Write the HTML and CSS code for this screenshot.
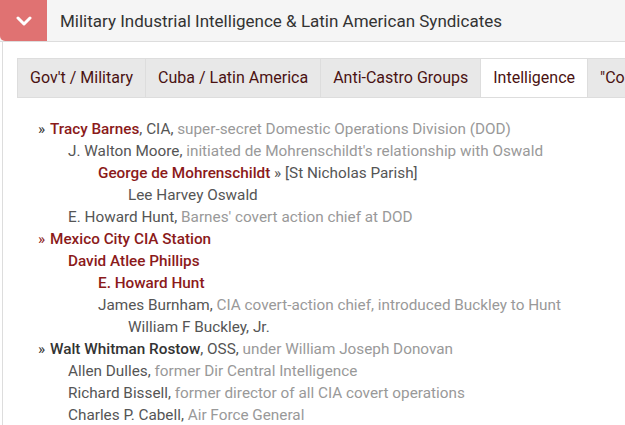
FILE: index.html
```html
<!DOCTYPE html>
<html lang="en">
<head>
    <meta charset="UTF-8">
    <title>Military Industrial Intelligence</title>
    <link rel="stylesheet" href="styles.css">
</head>
<body>
    <div class="acc-header">
        <div class="acc-toggle">
            <svg width="16" height="10" viewBox="0 0 16 10"><path d="M2 2 L8 8 L14 2" fill="none" stroke="#fff" stroke-width="3" stroke-linecap="round" stroke-linejoin="round"/></svg>
        </div>
        <div class="acc-title">Military Industrial Intelligence &amp; Latin American Syndicates</div>
    </div>

    <div class="acc-panel">
        <ul class="tabs">
            <li>Gov't / Military</li>
            <li>Cuba / Latin America</li>
            <li>Anti-Castro Groups</li>
            <li class="active">Intelligence</li>
            <li>"Cold War"</li>
        </ul>

        <div class="tree">
            <div class="row lv0"><span class="mark">»</span><span class="red">Tracy Barnes</span>, CIA, <span class="note">super-secret Domestic Operations Division (DOD)</span></div>
            <div class="row lv1">J. Walton Moore, <span class="note">initiated de Mohrenschildt's relationship with Oswald</span></div>
            <div class="row lv2"><span class="red">George de Mohrenschildt</span> » [St Nicholas Parish]</div>
            <div class="row lv3">Lee Harvey Oswald</div>
            <div class="row lv1">E. Howard Hunt, <span class="note">Barnes' covert action chief at DOD</span></div>
            <div class="row lv0"><span class="mark red-mark">»</span><span class="red">Mexico City CIA Station</span></div>
            <div class="row lv1"><span class="red">David Atlee Phillips</span></div>
            <div class="row lv2"><span class="red">E. Howard Hunt</span></div>
            <div class="row lv2">James Burnham, <span class="note">CIA covert-action chief, introduced Buckley to Hunt</span></div>
            <div class="row lv3">William F Buckley, Jr.</div>
            <div class="row lv0"><span class="mark">»</span><span class="dark">Walt Whitman Rostow</span>, OSS, <span class="note">under William Joseph Donovan</span></div>
            <div class="row lv1">Allen Dulles, <span class="note">former Dir Central Intelligence</span></div>
            <div class="row lv1">Richard Bissell, <span class="note">former director of all CIA covert operations</span></div>
            <div class="row lv1">Charles P. Cabell, <span class="note">Air Force General</span></div>
        </div>
    </div>
</body>
</html>
```

FILE: styles.css
```css
/* page */
body {
    margin: 0;
    font-family: Roboto, "Liberation Sans", sans-serif;
    background-color: #fff;
    color: #555;
    overflow: hidden;
    height: 425px;
}

/* accordion header */
.acc-header {
    display: flex;
    align-items: center;
    height: 41px;
    background-color: #f5f5f5;
    border-bottom: 1px solid #ddd;
}

.acc-toggle {
    width: 47px;
    height: 41px;
    background-color: #e07272;
    border-bottom-left-radius: 5px;
    display: flex;
    align-items: center;
    justify-content: center;
}

.acc-title {
    padding-left: 13px;
    font-size: 17px;
    color: #333;
    white-space: nowrap;
}

/* panel below the header */
.acc-panel {
    margin-left: 2px;
    border-left: 1px solid #ddd;
    padding: 16px 0 0 14px;
    height: 367px;
    overflow: hidden;
}

/* tabs */
.tabs {
    display: flex;
    list-style: none;
    margin: 0;
    padding: 0;
    background-color: #e8e8e8;
    border-top: 1px solid #ddd;
    border-left: 1px solid #ddd;
    border-bottom: 1px solid #ddd;
    white-space: nowrap;
    overflow: hidden;
}

.tabs li {
    padding: 10px 12px;
    font-size: 16px;
    line-height: 18px;
    color: #4a1212;
    border-right: 1px solid #ddd;
}

.tabs li.active {
    background-color: #fff;
}

/* tree list */
.tree {
    padding: 20px 0 0 21px;
    font-size: 15.3px;
    line-height: 22px;
    white-space: nowrap;
}

.row.lv0 { padding-left: 0; }
.row.lv1 { padding-left: 30px; }
.row.lv2 { padding-left: 60px; }
.row.lv3 { padding-left: 90px; }

.mark {
    display: inline-block;
    width: 12px;
    color: #333;
}

.red-mark { color: #8b1a1a; }

.red {
    color: #8b1a1a;
    font-weight: 500;
}

.dark {
    color: #333;
    font-weight: 500;
}

.note {
    color: #999;
}
```
